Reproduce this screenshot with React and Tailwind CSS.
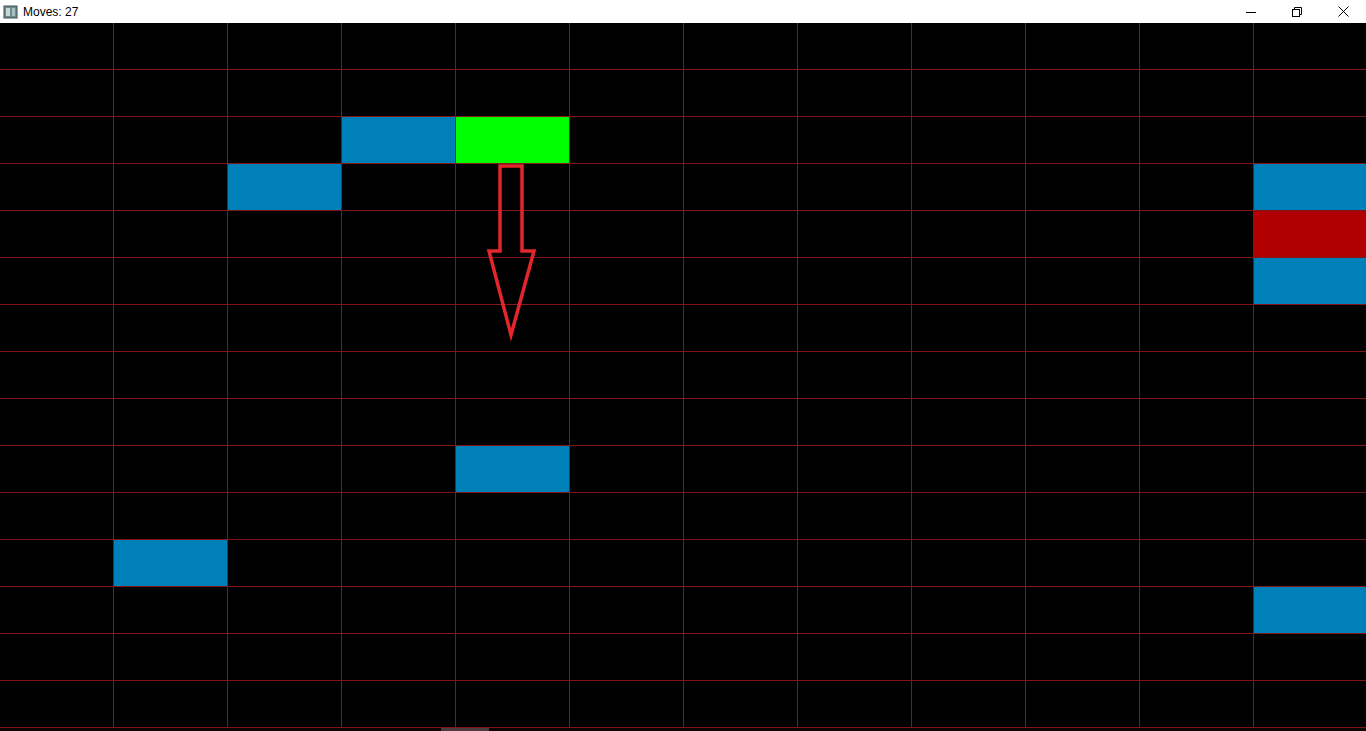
const COLS = 12;
const ROWS = 15;

const filled = {
  "2-3": "bg-[#0080b8]",
  "2-4": "bg-[#00ff00]",
  "3-2": "bg-[#0080b8]",
  "3-11": "bg-[#0080b8]",
  "4-11": "bg-[#b00000]",
  "5-11": "bg-[#0080b8]",
  "9-4": "bg-[#0080b8]",
  "11-1": "bg-[#0080b8]",
  "12-11": "bg-[#0080b8]",
};

function TitleBar() {
  return (
    <div className="h-[23px] bg-white flex items-center justify-between font-['Segoe_UI','Liberation_Sans',sans-serif] text-[12px] text-black">
      <div className="flex items-center">
        <svg width="16" height="16" viewBox="0 0 16 16" className="ml-[3px] mr-[4px]">
          <rect x="1" y="2" width="13" height="12" fill="#6d8b8f" stroke="#3d5256" />
          <rect x="3" y="4" width="4" height="8" fill="#c8d8da" />
          <rect x="9" y="4" width="3" height="8" fill="#a7c0c2" />
        </svg>
        <span>Moves: 27</span>
      </div>
      <div className="flex h-full">
        <div className="w-[46px] flex items-center justify-center">
          <svg width="10" height="10" viewBox="0 0 10 10">
            <path d="M0 5.5h10" stroke="#000" strokeWidth="1" />
          </svg>
        </div>
        <div className="w-[46px] flex items-center justify-center">
          <svg width="10" height="10" viewBox="0 0 10 10" fill="none" stroke="#000" strokeWidth="1">
            <rect x="0.5" y="2.5" width="7" height="7" />
            <path d="M2.5 2.5V0.5h7v7h-2" />
          </svg>
        </div>
        <div className="w-[46px] flex items-center justify-center">
          <svg width="11" height="11" viewBox="0 0 11 11" stroke="#000" strokeWidth="1">
            <path d="M0.5 0.5l10 10M10.5 0.5l-10 10" />
          </svg>
        </div>
      </div>
    </div>
  );
}

export default function App() {
  const rows = Array.from({ length: ROWS }, (_, r) => r);
  const cols = Array.from({ length: COLS }, (_, c) => c);

  return (
    <div className="w-[1366px] h-[731px] overflow-hidden bg-black">
      <TitleBar />
      <div className="relative overflow-hidden">
        <div className="ml-[-1px] flex flex-col">
          {rows.map((r) => (
            <div key={r} className={`flex ${r === 0 ? "h-[46px]" : "h-[47px] border-t border-[#801818]"}`}>
              {cols.map((c) => (
                <div
                  key={c}
                  className={`w-[114px] shrink-0 border-l border-[#801818] ${filled[`${r}-${c}`] || ""}`}
                />
              ))}
            </div>
          ))}
        </div>
        <div className="border-t border-[#801818] h-[4px] bg-[#0a0505] relative">
          <div className="absolute left-[441px] top-0 w-[48px] h-[4px] bg-[#4a3c3c]" />
        </div>
        <svg className="absolute left-0 top-0" width="1366" height="708">
          <polygon
            points="500,143 522,143 522,228 534,228 511,312 489,228 500,228"
            fill="none"
            stroke="#e3262b"
            strokeWidth="3.5"
            strokeLinejoin="miter"
          />
        </svg>
      </div>
    </div>
  );
}
